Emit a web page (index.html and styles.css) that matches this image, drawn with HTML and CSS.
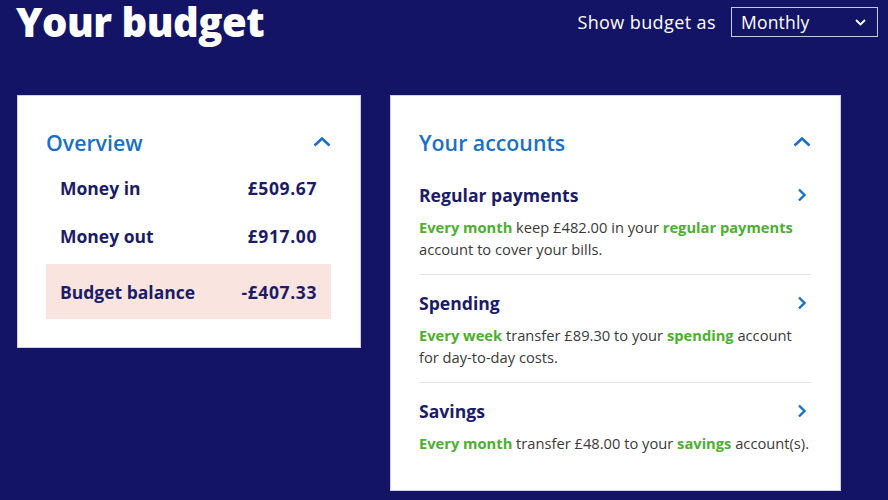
FILE: index.html
```html
<!DOCTYPE html>
<html lang="en">
<head>
<meta charset="utf-8">
<title>Your budget</title>
<link rel="stylesheet" href="styles.css">
</head>
<body>
<header class="top">
  <h1 class="title">Your budget</h1>
  <div class="show">
    <span class="show-label">Show budget as</span>
    <div class="select">
      <span>Monthly</span>
      <svg class="select-chev" width="11" height="7" viewBox="0 0 11 7"><polyline points="1,1 5.5,5.5 10,1" fill="none" stroke="#fff" stroke-width="1.8"/></svg>
    </div>
  </div>
</header>
<main class="cards">
  <section class="card card-overview">
    <div class="card-head">
      <h2>Overview</h2>
      <svg width="18" height="10" viewBox="0 0 18 10"><polyline points="1.5,8.5 9,1.5 16.5,8.5" fill="none" stroke="#1a6fc6" stroke-width="2.6"/></svg>
    </div>
    <div class="row"><span>Money in</span><span class="amt">£509.67</span></div>
    <div class="row"><span>Money out</span><span class="amt">£917.00</span></div>
    <div class="row row-balance"><span>Budget balance</span><span class="amt">-£407.33</span></div>
  </section>
  <section class="card card-accounts">
    <div class="card-head">
      <h2>Your accounts</h2>
      <svg width="18" height="10" viewBox="0 0 18 10"><polyline points="1.5,8.5 9,1.5 16.5,8.5" fill="none" stroke="#1a6fc6" stroke-width="2.6"/></svg>
    </div>
    <div class="acc">
      <div class="acc-head"><h3>Regular payments</h3><svg width="10" height="14" viewBox="0 0 10 14"><polyline points="2,1.5 7.5,7 2,12.5" fill="none" stroke="#1a6fc6" stroke-width="2.4"/></svg></div>
      <p class="acc-desc"><b>Every month</b> keep £482.00 in your <b>regular payments</b> account to cover your bills.</p>
    </div>
    <div class="acc">
      <div class="acc-head"><h3>Spending</h3><svg width="10" height="14" viewBox="0 0 10 14"><polyline points="2,1.5 7.5,7 2,12.5" fill="none" stroke="#1a6fc6" stroke-width="2.4"/></svg></div>
      <p class="acc-desc"><b>Every week</b> transfer £89.30 to your <b>spending</b> account for day-to-day costs.</p>
    </div>
    <div class="acc">
      <div class="acc-head"><h3>Savings</h3><svg width="10" height="14" viewBox="0 0 10 14"><polyline points="2,1.5 7.5,7 2,12.5" fill="none" stroke="#1a6fc6" stroke-width="2.4"/></svg></div>
      <p class="acc-desc"><b>Every month</b> transfer £48.00 to your <b>savings</b> account(s).</p>
    </div>
  </section>
</main>
</body>
</html>
```
FILE: styles.css
```css
* { box-sizing: border-box; }
html, body { margin: 0; padding: 0; }
body {
  background: #131465;
  font-family: "Open Sans", "Noto Sans", sans-serif;
  width: 888px;
  height: 500px;
  overflow: hidden;
}
.top {
  display: flex;
  justify-content: space-between;
  align-items: center;
  height: 44px;
  padding: 0 10px 0 16px;
}
.title {
  margin: 0;
  color: #fff;
  font-size: 40px;
  font-weight: 800;
  line-height: 44px;
  letter-spacing: -0.5px;
}
.show {
  display: flex;
  align-items: center;
  gap: 15px;
}
.show-label {
  color: #fff;
  font-size: 18px;
  letter-spacing: 0.4px;
}
.select {
  width: 147px;
  height: 30px;
  border: 1px solid #c9c9dc;
  display: flex;
  align-items: center;
  justify-content: space-between;
  padding: 0 11px 0 9px;
  color: #fff;
  font-size: 17.5px;
  letter-spacing: 0.2px;
}
.cards {
  display: flex;
  align-items: flex-start;
  gap: 29px;
  padding-left: 17px;
  margin-top: 51px;
}
.card {
  background: #fff;
  border: 1px solid #cfd0e0;
}
.card-overview {
  width: 344px;
  padding: 32px 29px 28px 28px;
}
.card-accounts {
  width: 451px;
  padding: 32px 29px 22px 28px;
}
.card-head {
  display: flex;
  justify-content: space-between;
  align-items: center;
  height: 28px;
}
.card-head h2 {
  margin: 0;
  color: #1a6fc6;
  font-size: 21.3px;
  font-weight: 600;
}
.card-overview .card-head { margin-bottom: 8px; }
.row {
  display: flex;
  justify-content: space-between;
  align-items: center;
  height: 48px;
  padding: 0 14px;
  color: #1b1b68;
  font-size: 17.5px;
  font-weight: 700;
}
.amt { letter-spacing: 0.6px; }
.row-balance {
  margin-top: 4px;
  height: 55px;
  background: #f9e4df;
}
.card-accounts .card-head { margin-bottom: 11px; }
.acc {
  padding: 16px 0 14px;
  border-bottom: 1px solid #e4e4e8;
}
.acc:last-child { border-bottom: none; }
.acc-head {
  display: flex;
  justify-content: space-between;
  align-items: center;
  height: 24px;
  padding-right: 4px;
}
.acc-head h3 {
  margin: 0;
  color: #1b1b68;
  font-size: 17.6px;
  font-weight: 700;
}
.acc-desc {
  margin: 9px 0 0;
  color: #3a3a3a;
  font-size: 14.7px;
  line-height: 22px;
}
.acc-desc b {
  color: #4caf30;
  font-weight: 700;
}
```
